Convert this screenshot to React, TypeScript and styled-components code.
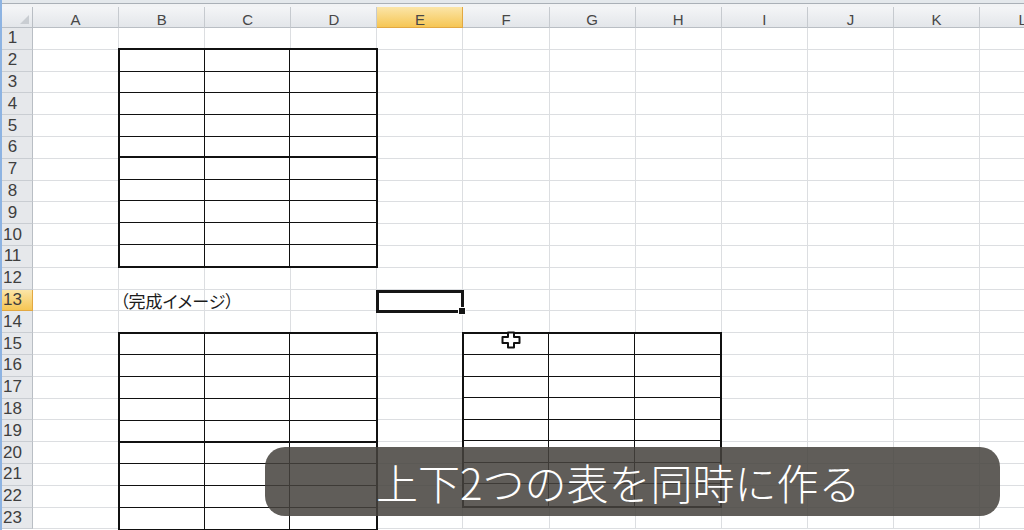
import React from 'react'
import styled, { createGlobalStyle, css } from 'styled-components'

const COLUMNS = ['A', 'B', 'C', 'D', 'E', 'F', 'G', 'H', 'I', 'J', 'K', 'L']
const ROW_COUNT = 23
const COL_W = 86.1
const ROW_H = 21.8
const ACTIVE_COL = 'E'
const ACTIVE_ROW = 13

const GlobalStyle = createGlobalStyle`
  html, body {
    margin: 0;
    padding: 0;
    background: #fff;
    overflow: hidden;
  }
  body {
    font-family: 'Liberation Sans', Arial, sans-serif;
  }
`

const Screen = styled.div`
  position: relative;
  width: 1024px;
  height: 530px;
  overflow: hidden;
  box-sizing: border-box;
  border-left: 2px solid #8db3e2;
  display: flex;
  flex-direction: column;
  background: #fff;
`

const TopStrip = styled.div`
  flex: none;
  height: 7px;
  background: linear-gradient(#e4e8ec 0 3px, #aab0b7 3px 4px, #f2f3f5 4px);
`

const SheetArea = styled.div`
  flex: none;
  display: grid;

  & > * {
    grid-area: 1 / 1;
  }
`

const sheetGrid = css`
  display: grid;
  grid-template-columns: 31px repeat(${COLUMNS.length}, ${COL_W}px);
  grid-template-rows: 21px repeat(${ROW_COUNT}, ${ROW_H}px);
`

const CellLayer = styled.div`
  ${sheetGrid}
`

const OverlayLayer = styled.div`
  ${sheetGrid}
  pointer-events: none;
`

const headerActive = css`
  background: linear-gradient(#fbe5a8, #f6c654);
  border-color: #e2a842;
`

const Corner = styled.div`
  position: relative;
  box-sizing: border-box;
  background: linear-gradient(#f4f5f7, #e3e6ea);
  border-right: 1px solid #b9bec4;
  border-bottom: 1px solid #b9bec4;

  &::after {
    content: '';
    position: absolute;
    right: 3px;
    bottom: 3px;
    border-style: solid;
    border-width: 0 0 9px 9px;
    border-color: transparent transparent #c9cdd2 transparent;
  }
`

const ColHeader = styled.div<{ $active: boolean }>`
  box-sizing: border-box;
  display: flex;
  justify-content: center;
  align-items: center;
  padding-top: 4px;
  font-size: 15px;
  color: #474747;
  background: linear-gradient(#f4f5f7, #e3e6ea);
  border-right: 1px solid #c6cacf;
  border-bottom: 1px solid #b9bec4;
  ${p => p.$active && headerActive}
`

const RowHeader = styled.div<{ $active: boolean }>`
  box-sizing: border-box;
  display: flex;
  align-items: center;
  justify-content: center;
  padding-right: 9px;
  font-size: 17px;
  color: #3f3f3f;
  background: #e6e8eb;
  border-right: 1px solid #b9bec4;
  border-bottom: 1px solid #c9cdd2;
  ${p => p.$active && headerActive}
`

const Cell = styled.div`
  box-sizing: border-box;
  border-right: 1px solid #dcdee1;
  border-bottom: 1px solid #dcdee1;
`

const Table = styled.div<{ $col: number; $row: number; $rows: number; $open: boolean }>`
  grid-column: ${p => p.$col} / span 3;
  grid-row: ${p => p.$row} / span ${p => p.$rows};
  margin: -1.5px -0.5px -0.5px -1.5px;
  box-sizing: border-box;
  border: 2.6px solid #111;
  border-bottom: ${p => (p.$open ? 'none' : '2.6px solid #111')};
  background: #fff;
  display: grid;
  grid-template-columns: repeat(3, 1fr);
  grid-template-rows: repeat(${p => p.$rows}, 1fr);
`

const TableCell = styled.div<{ $thick: boolean; $last: boolean }>`
  box-sizing: border-box;
  border-right: 1.7px solid #111;
  border-bottom: ${p => (p.$last ? 'none' : p.$thick ? '2.4px solid #111' : '1.3px solid #111')};

  &:nth-child(3n) {
    border-right: none;
  }
`

const CellText = styled.div<{ $col: number; $row: number }>`
  grid-column: ${p => p.$col};
  grid-row: ${p => p.$row};
  display: flex;
  align-items: center;
  padding-left: 1px;
  white-space: nowrap;
  font-family: 'Noto Sans CJK JP', 'Liberation Sans', sans-serif;
  font-size: 17px;
  font-feature-settings: 'palt';
  color: #1c1c1c;
`

const Selection = styled.div<{ $col: number; $row: number }>`
  grid-column: ${p => p.$col};
  grid-row: ${p => p.$row};
  position: relative;
  margin: 0 -0.5px -1.5px -1.5px;
  box-sizing: border-box;
  border: 3px solid #151515;
`

const FillHandle = styled.span`
  position: absolute;
  right: -5px;
  bottom: -5px;
  width: 6px;
  height: 6px;
  background: #151515;
  border: 1px solid #fff;
`

const Cursor = styled.svg`
  position: absolute;
  left: 499px;
  top: 331px;
  width: 20px;
  height: 18px;
`

const Caption = styled.div`
  position: absolute;
  left: 263px;
  top: 447px;
  width: 735px;
  height: 69px;
  box-sizing: border-box;
  padding-left: 111px;
  display: flex;
  align-items: center;
  border-radius: 20px;
  background: rgba(70, 66, 62, 0.86);
  color: #fff;
  font-family: 'Noto Sans CJK JP', sans-serif;
  font-size: 42px;
  font-weight: 300;
`

const colIndex = (letter: string) => COLUMNS.indexOf(letter) + 2
const rowIndex = (row: number) => row + 1

function BorderedTable(props: {
  col: string
  row: number
  rows: number
  thickAfter?: number
  open?: boolean
}) {
  const { col, row, rows, thickAfter, open = false } = props
  return (
    <Table $col={colIndex(col)} $row={rowIndex(row)} $rows={rows} $open={open}>
      {Array.from({ length: rows * 3 }, (_, i) => {
        const r = Math.floor(i / 3)
        return <TableCell key={i} $thick={thickAfter === r + 1} $last={r === rows - 1 && !open} />
      })}
    </Table>
  )
}

export default function App() {
  const rows = Array.from({ length: ROW_COUNT }, (_, i) => i + 1)

  return (
    <>
      <GlobalStyle />
      <Screen>
        <TopStrip />
        <SheetArea>
          <CellLayer>
            <Corner />
            {COLUMNS.map(c => (
              <ColHeader key={c} $active={c === ACTIVE_COL}>
                {c}
              </ColHeader>
            ))}
            {rows.map(r => (
              <React.Fragment key={r}>
                <RowHeader $active={r === ACTIVE_ROW}>{r}</RowHeader>
                {COLUMNS.map(c => (
                  <Cell key={c} />
                ))}
              </React.Fragment>
            ))}
          </CellLayer>
          <OverlayLayer>
            <BorderedTable col='B' row={2} rows={10} thickAfter={5} />
            <CellText $col={colIndex('B')} $row={rowIndex(13)}>
              （完成イメージ）
            </CellText>
            <Selection $col={colIndex(ACTIVE_COL)} $row={rowIndex(ACTIVE_ROW)}>
              <FillHandle />
            </Selection>
            <BorderedTable col='B' row={15} rows={9} thickAfter={5} open />
            <BorderedTable col='F' row={15} rows={8} />
          </OverlayLayer>
        </SheetArea>
        <Cursor viewBox='0 0 20 18'>
          <polygon
            points='7,1.5 13,1.5 13,6 18.5,6 18.5,12 13,12 13,16.5 7,16.5 7,12 1.5,12 1.5,6 7,6'
            fill='#fff'
            stroke='#111'
            strokeWidth='2'
            strokeLinejoin='round'
          />
        </Cursor>
        <Caption>上下2つの表を同時に作る</Caption>
      </Screen>
    </>
  )
}
